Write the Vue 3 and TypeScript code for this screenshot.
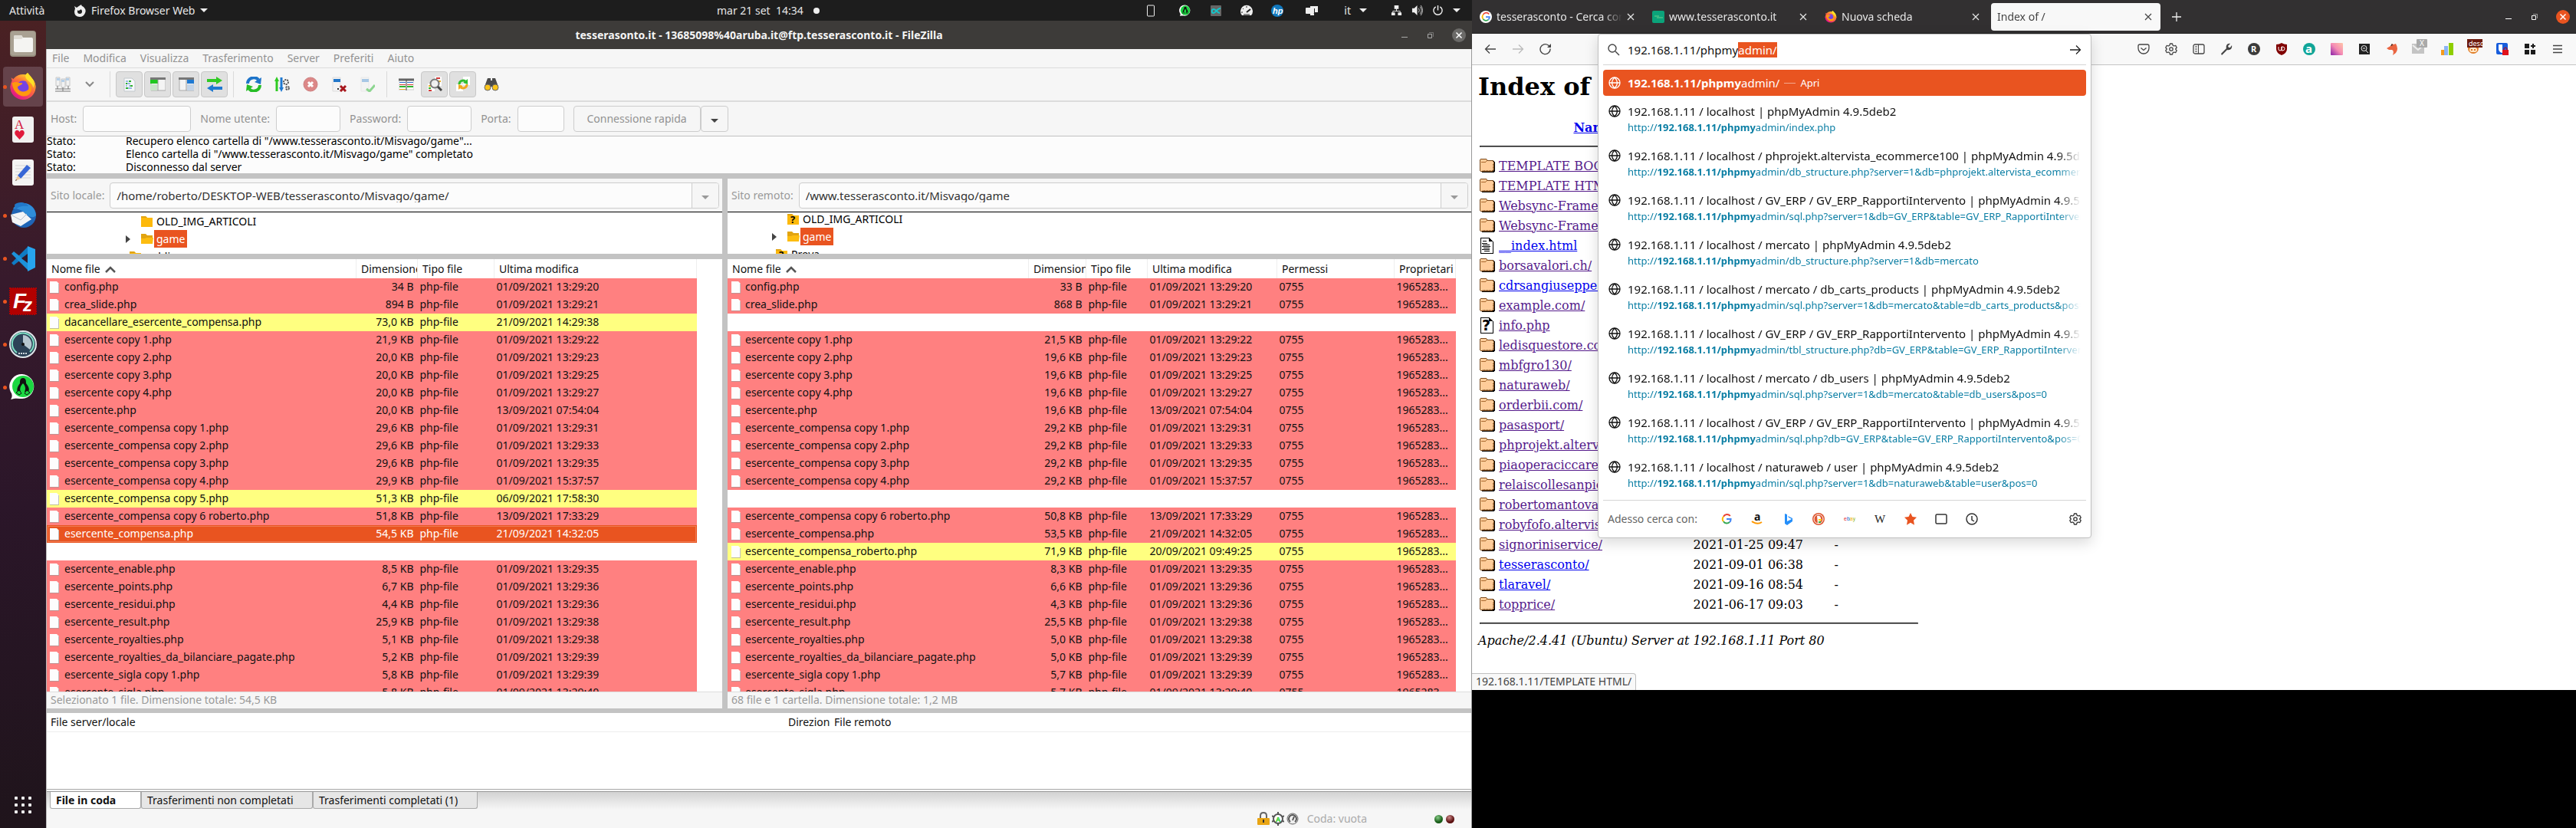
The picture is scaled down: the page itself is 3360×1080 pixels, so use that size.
<script setup lang="ts">
import { onMounted, ref } from 'vue'

type Kind = 'same' | 'only' | 'sel' | 'gap'
interface FileRow { name: string; size: string; date: string; kind: Kind }
interface Glyph { id: string; label: string; box: string; art: string }

const row = (name: string, size: string, date: string, kind: Kind = 'same'): FileRow => ({ name, size, date, kind })
const gap = (): FileRow => row('', '', '', 'gap')

const d1 = '01/09/2021 13:29:'
const localFiles: FileRow[] = [
  row('config.php', '34 B', d1 + '20'),
  row('crea_slide.php', '894 B', d1 + '21'),
  row('dacancellare_esercente_compensa.php', '73,0 KB', '21/09/2021 14:29:38', 'only'),
  row('esercente copy 1.php', '21,9 KB', d1 + '22'),
  row('esercente copy 2.php', '20,0 KB', d1 + '23'),
  row('esercente copy 3.php', '20,0 KB', d1 + '25'),
  row('esercente copy 4.php', '20,0 KB', d1 + '27'),
  row('esercente.php', '20,0 KB', '13/09/2021 07:54:04'),
  row('esercente_compensa copy 1.php', '29,6 KB', d1 + '31'),
  row('esercente_compensa copy 2.php', '29,6 KB', d1 + '33'),
  row('esercente_compensa copy 3.php', '29,6 KB', d1 + '35'),
  row('esercente_compensa copy 4.php', '29,9 KB', '01/09/2021 15:37:57'),
  row('esercente_compensa copy 5.php', '51,3 KB', '06/09/2021 17:58:30', 'only'),
  row('esercente_compensa copy 6 roberto.php', '51,8 KB', '13/09/2021 17:33:29'),
  row('esercente_compensa.php', '54,5 KB', '21/09/2021 14:32:05', 'sel'),
  gap(),
  row('esercente_enable.php', '8,5 KB', d1 + '35'),
  row('esercente_points.php', '6,7 KB', d1 + '36'),
  row('esercente_residui.php', '4,4 KB', d1 + '36'),
  row('esercente_result.php', '25,9 KB', d1 + '38'),
  row('esercente_royalties.php', '5,1 KB', d1 + '38'),
  row('esercente_royalties_da_bilanciare_pagate.php', '5,2 KB', d1 + '39'),
  row('esercente_sigla copy 1.php', '5,8 KB', d1 + '39'),
  row('esercente_sigla.php', '5,8 KB', d1 + '40'),
]
const remoteFiles: FileRow[] = [
  row('config.php', '33 B', d1 + '20'),
  row('crea_slide.php', '868 B', d1 + '21'),
  gap(),
  row('esercente copy 1.php', '21,5 KB', d1 + '22'),
  row('esercente copy 2.php', '19,6 KB', d1 + '23'),
  row('esercente copy 3.php', '19,6 KB', d1 + '25'),
  row('esercente copy 4.php', '19,6 KB', d1 + '27'),
  row('esercente.php', '19,6 KB', '13/09/2021 07:54:04'),
  row('esercente_compensa copy 1.php', '29,2 KB', d1 + '31'),
  row('esercente_compensa copy 2.php', '29,2 KB', d1 + '33'),
  row('esercente_compensa copy 3.php', '29,2 KB', d1 + '35'),
  row('esercente_compensa copy 4.php', '29,2 KB', '01/09/2021 15:37:57'),
  gap(),
  row('esercente_compensa copy 6 roberto.php', '50,8 KB', '13/09/2021 17:33:29'),
  row('esercente_compensa.php', '53,5 KB', '21/09/2021 14:32:05'),
  row('esercente_compensa_roberto.php', '71,9 KB', '20/09/2021 09:49:25', 'only'),
  row('esercente_enable.php', '8,3 KB', d1 + '35'),
  row('esercente_points.php', '6,6 KB', d1 + '36'),
  row('esercente_residui.php', '4,3 KB', d1 + '36'),
  row('esercente_result.php', '25,5 KB', d1 + '38'),
  row('esercente_royalties.php', '5,0 KB', d1 + '38'),
  row('esercente_royalties_da_bilanciare_pagate.php', '5,0 KB', d1 + '39'),
  row('esercente_sigla copy 1.php', '5,7 KB', d1 + '39'),
  row('esercente_sigla.php', '5,7 KB', d1 + '40'),
]

const sites = [
  {
    id: 'local', label: 'Sito locale:', path: '/home/roberto/DESKTOP-WEB/tesserasconto/Misvago/game/', files: localFiles,
    next: 'public', status: 'Selezionato 1 file. Dimensione totale: 54,5 KB',
  },
  {
    id: 'remote', label: 'Sito remoto:', path: '/www.tesserasconto.it/Misvago/game', files: remoteFiles,
    next: 'Prova', status: '68 file e 1 cartella. Dimensione totale: 1,2 MB',
  },
]

const menus = ['File', 'Modifica', 'Visualizza', 'Trasferimento', 'Server', 'Preferiti', 'Aiuto']
const log = [
  'Recupero elenco cartella di "/www.tesserasconto.it/Misvago/game"...',
  'Elenco cartella di "/www.tesserasconto.it/Misvago/game" completato',
  'Disconnesso dal server',
]

const flame = '<circle cx="17" cy="18" r="16" fill="url(#ffo)"/><path d="M4 13 2 6l6 4c4-5 9-3 12-6 1-3 2-3 3-4 0 5 9 7 10 17 0 9-7 16-16 16S1 27 1 18c0-2 1-4 3-5z" fill="url(#ffo)"/><circle cx="17" cy="18" r="8" fill="#7542e5"/><path d="M3 13c6-3 7 0 13 0 1 2-4 3-6 5 1 6 9 8 14 3 1-4-1-8-4-9 8 0 10 9 6 14-7 8-21 3-23-13z" fill="#ff980e"/><path d="M20 4c0 6 9 8 10 15 4-8-3-14-7-19-1 1-3 2-3 4z" fill="#ffe226"/>'
const penguin = '<path d="M2 34c2-3 2-5 1-8A16 16 0 1 1 17 33c-5 0-9-1-15 1z" fill="#fff"/><circle cx="18" cy="17" r="14" fill="#1bd741"/><path d="M18 6c4 0 4 4 4 7 3 4 5 7 3 11H11c-2-4 1-8 3-11 0-3 0-7 4-7z" fill="#111"/><path d="M18 13c3 3 4 7 2 11h-5c-2-4 0-8 3-11z" fill="#1bd741"/><path d="m9 25 4-3 3 4-3 2zM27 25l-4-3-3 4 3 2z" fill="#1bd741" stroke="#111"/>'

const dock: (Glyph & { running: boolean })[] = [
  { id: 'files', label: 'File', running: false, box: '0 0 36 36', art: '<rect x="1" y="1" width="34" height="34" rx="4" fill="#989080"/><rect x="2" y="2" width="32" height="31" rx="3" fill="#a9a193"/><path d="M6 9q0-2 2-2h8l2 3h11q2 0 2 2v15q0 2-2 2H8q-2 0-2-2z" fill="#f4f4f2"/><path d="M6 9q0-2 2-2h8l2 3-2 2H6z" fill="#e0ddd6"/>' },
  { id: 'firefox', label: 'Firefox', running: true, box: '0 0 34 35', art: flame },
  { id: 'cards', label: 'Solitario', running: false, box: '0 0 36 36', art: '<rect x="4" y="1" width="28" height="34" rx="3" fill="#f1f1f0"/><text x="7" y="17" font-family="Liberation Serif" font-size="17" fill="#d4153c">A</text><path d="M13.500 31 8 25q-2-4 1-6 3-1 4.500 2 1.500-3 4.500-2 3 2 1 6z" fill="#e01b3c"/>' },
  { id: 'editor', label: 'Editor', running: false, box: '0 0 36 36', art: '<rect x="4" y="1" width="28" height="34" rx="3" fill="#f4f4f3"/><path d="M8 9h20M8 13h20M8 17h20M8 21h20M8 25h20" stroke="#d5d5d5"/><path d="m23 8 5 4-13 14-4-4z" fill="#3767d6"/><path d="m11 22 4 4-7 3z" fill="#edc9a0"/><path d="m9 27 1 1-2 1z" fill="#333"/>' },
  { id: 'mail', label: 'Thunderbird', running: true, box: '0 0 36 36', art: '<circle cx="19" cy="18" r="16" fill="#1f64b5"/><path d="M5 9C14-4 34 2 35 18c-4 4-8 2-11 0C19 12 12 9 5 9z" fill="#2f8dd9"/><path d="M2 17 18 13l11 10-14 9L4 27z" fill="#f3f4f6"/><path d="m2 17 13 7 8-8" fill="none" stroke="#b9c0cb"/><path d="M7 4c6-5 15-3 18 2-7-1-14 0-17 5z" fill="#2177c8"/>' },
  { id: 'code', label: 'Visual Studio Code', running: true, box: '0 0 36 36', art: '<path d="M3 24 24 3l2 8L6 27z" fill="#0f7bc4"/><path d="M3 12l21 21 2-8L6 9z" fill="#1c92da"/><path d="m24 2 10 4v24l-10 5z" fill="#27a4ee"/><path d="M24 12v12l-8-6z" fill="#301a2c"/>' },
  { id: 'fz', label: 'FileZilla', running: true, box: '0 0 36 36', art: '<rect x="1" y="1" width="34" height="34" fill="#b30000" stroke="#b30000" stroke-width="2" stroke-dasharray="2 1"/><text x="5" y="27" font-family="Liberation Sans" font-size="28" font-weight="bold" font-style="italic" fill="#fff">F</text><text x="18" y="31" font-family="Liberation Sans" font-size="24" font-weight="bold" font-style="italic" fill="#fff">z</text>' },
  { id: 'gauge', label: 'Stacer', running: true, box: '0 0 36 36', art: '<circle cx="18" cy="18" r="17" fill="#2c4257" stroke="#dfe6ea" stroke-width="2"/><path d="M10 29A14 14 0 1 1 27 28" fill="none" stroke="#7de0c4" stroke-width="2"/><path d="M18 18V6a12 12 0 0 1 9 19z" fill="#b7c7d0"/><circle cx="18" cy="18" r="2" fill="#111"/><path d="M12 30h12" stroke="#cfd8dd" stroke-width="2" stroke-dasharray="2 1"/>' },
  { id: 'wa', label: 'WhatsApp', running: true, box: '0 0 36 36', art: penguin },
]

const tray: Glyph[] = [
  { id: 'phone', label: 'Telefono', box: '0 0 16 16', art: '<rect x="3.500" y="1" width="9" height="14" rx="1" fill="none" stroke="#eee"/>' },
  { id: 'wa', label: 'WhatsApp', box: '0 0 36 36', art: penguin },
  { id: 'inf', label: 'Sincronizzazione', box: '0 0 16 16', art: '<rect x="1" y="1" width="14" height="14" rx="1" fill="#666"/><path d="M14 5C10 4 8 11 5 11 2 11 2 6 5 6s5 5 8 5" fill="none" stroke="#14c5c9" stroke-width="2"/>' },
  { id: 'meter', label: 'Prestazioni', box: '0 0 16 16', art: '<path d="M2 14A8 8 0 1 1 14 14z" fill="#eee"/><path d="m8 10 5-4" stroke="#222" stroke-width="2"/><path d="M3 10H1m3-4L3 5m5-1V2m-4 11h8" stroke="#222"/>' },
  { id: 'hp', label: 'HP', box: '0 0 16 16', art: '<circle cx="8" cy="8" r="8" fill="#1178bd"/><text x="2" y="12" font-family="Liberation Sans" font-size="11" font-weight="bold" font-style="italic" fill="#fff">hp</text>' },
  { id: 'screens', label: 'Schermi', box: '0 0 16 16', art: '<path d="M6 2h10v8h-4V5H6z" fill="#eee"/><rect x="0" y="4" width="11" height="8" rx="1" fill="#eee"/><path d="M6 13h5" stroke="#eee" stroke-width="2"/>' },
]
const system: Glyph[] = [
  { id: 'net', label: 'Rete', box: '0 0 16 16', art: '<path d="M5 1h6v5H5zM1 11h5v4H1zM10 11h5v4h-5z" fill="#eee"/><path d="M8 5v4M3 12V9h10v3" stroke="#eee" fill="none"/>' },
  { id: 'snd', label: 'Volume', box: '0 0 16 16', art: '<path d="M1 5h3l4-4v14l-4-4H1z" fill="#eee"/><path d="M10 5q2 3 0 6m2-8q4 5 0 10m1-12q5 7 0 14" stroke="#ccc" fill="none"/>' },
  { id: 'pow', label: 'Spegni', box: '0 0 16 16', art: '<path d="M5 3a6 6 0 1 0 6 0M8 1v7" stroke="#eee" fill="none" stroke-width="1.500"/>' },
]

const doc = '<path d="M3 2h10l4 4v13H3z" fill="#f5f7f9" stroke="#c3c8cc"/>'
const toolGroups: (Glyph & { on?: boolean })[][] = [
  [
    { id: 'log', label: 'Registro', on: true, box: '0 0 20 20', art: doc + '<path d="M5 6h3m2 0h2M5 9h6M5 12h2m2 0h5M5 15h8" stroke="#3d7cc9"/><path d="M9 6h3M5 9h2m4 3h3M5 15h3" stroke="#2db12d" stroke-width="2"/>' },
    { id: 'ltree', label: 'Albero locale', on: true, box: '0 0 20 20', art: '<path d="M1 2h19v16H1z" fill="#f4f4f4" stroke="#aaa"/><path d="M0 1h20v3H0z" fill="#777"/><path d="M0 4h10v5H0z" fill="#1fc71f"/><path d="M0 10h9v8H0z" fill="#c9e4c9"/><path d="M10 4v14" stroke="#999"/>' },
    { id: 'rtree', label: 'Albero remoto', on: true, box: '0 0 20 20', art: '<path d="M1 2h19v16H1z" fill="#f4f4f4" stroke="#aaa"/><path d="M0 1h20v3H0z" fill="#777"/><path d="M11 4h9v5h-9z" fill="#1e79d2"/><path d="M11 10h9v8h-9z" fill="#c3d4e8"/><path d="M10 4v14" stroke="#999"/>' },
    { id: 'queue', label: 'Coda', on: true, box: '0 0 20 20', art: '<path d="M0 3h12V0l8 5-8 5V7H0z" fill="#2fca23"/><path d="M20 13H8v-3l-8 5 8 5v-3h12z" fill="#1e79d2"/>' },
  ],
  [
    { id: 'refresh', label: 'Aggiorna', box: '0 0 20 20', art: '<path d="M2 9A8 8 0 0 1 16 4" fill="none" stroke="#1d74c9" stroke-width="4"/><path d="m20 1-1 9-8-3z" fill="#1d74c9"/><path d="M18 11A8 8 0 0 1 4 16" fill="none" stroke="#26bd26" stroke-width="4"/><path d="m0 19 1-9 8 3z" fill="#26bd26"/>' },
    { id: 'process', label: 'Elabora coda', box: '0 0 20 20', art: '<path d="M3 19V5" stroke="#2fca23" stroke-width="3"/><path d="M0 6l3-6 3 6z" fill="#2fca23"/><path d="M9 1v14" stroke="#1e79d2" stroke-width="3"/><path d="M6 14l3 6 3-6z" fill="#1e79d2"/><circle cx="15" cy="7" r="3" fill="none" stroke="#555" stroke-width="2" stroke-dasharray="2 1"/><circle cx="17" cy="15" r="2" fill="none" stroke="#555" stroke-width="2" stroke-dasharray="2 1"/>' },
    { id: 'cancel', label: 'Annulla', box: '0 0 20 20', art: '<circle cx="10" cy="10" r="9" fill="#dc8888" stroke="#cc8080"/><path d="m7 7 6 6m0-6-6 6" stroke="#fff" stroke-width="3"/>' },
    { id: 'disc', label: 'Disconnetti', box: '0 0 20 20', art: '<path d="M2 1h10v18H2z" fill="#f2f2f2" stroke="#ddd"/><path d="M3 3h9v4H3z" fill="#2277c9"/><path d="M8 16h2" stroke="#333" stroke-width="2"/><path d="m12 12 7 7m0-7-7 7" stroke="#a6161c" stroke-width="3"/>' },
    { id: 'reconn', label: 'Riconnetti', box: '0 0 20 20', art: '<g opacity=".5"><path d="M2 1h10v18H2z" fill="#f2f2f2" stroke="#ddd"/><path d="M3 3h9v4H3z" fill="#5b9ad6"/><path d="m9 16 4 3 7-8" fill="none" stroke="#25b52b" stroke-width="3"/></g>' },
  ],
  [
    { id: 'filter', label: 'Filtri', box: '0 0 20 20', art: '<path d="M0 3h20v14H0z" fill="#fff" stroke="#ccc"/><path d="M0 4h20" stroke="#666" stroke-width="3"/><path d="M1 7.500h8m2 0h8" stroke="#2c6fc9"/><path d="M1 10.500h8m2 0h8" stroke="#d43939"/><path d="M1 13h8m2 0h8" stroke="#2fb52f" stroke-width="2"/><path d="M1 16.500h8" stroke="#e8ad2b"/><path d="M10 4v14" stroke="#444"/>' },
    { id: 'compare', label: 'Confronta', on: true, box: '0 0 20 20', art: '<path d="M10 0h9v12h-9zM1 9h9v10H1z" fill="#fff"/><path d="M12 2h5M2 18h4" stroke="#d43939" stroke-width="2"/><path d="M15 6h3M2 12h3" stroke="#e8ad2b" stroke-width="2"/><path d="M2 15h3" stroke="#2fb52f" stroke-width="2"/><circle cx="10" cy="9" r="5.500" fill="#eee" fill-opacity=".8" stroke="#777" stroke-width="2"/><path d="m14 13 5 5" stroke="#444" stroke-width="3"/>' },
    { id: 'sync', label: 'Navigazione sincronizzata', on: true, box: '0 0 20 20', art: '<path d="M10 0h9v11h-9zM1 10h9v9H1z" fill="#fff"/><path d="M5 10a5 5 0 0 1 8-4" fill="none" stroke="#2fbe2f" stroke-width="3"/><path d="M16 3v7l-6-2z" fill="#2fbe2f"/><path d="M15 10a5 5 0 0 1-8 4" fill="none" stroke="#eea71c" stroke-width="3"/><path d="M4 17v-7l6 2z" fill="#eea71c"/>' },
    { id: 'find', label: 'Cerca file', box: '0 0 20 20', art: '<path d="M5 2h4v3h2V2h4l4 11H1z" fill="#4b4b4b"/><circle cx="5" cy="14" r="4" fill="#fcc419" stroke="#666"/><circle cx="15" cy="14" r="4" fill="#fcc419" stroke="#666"/>' },
  ],
]

const googleG = '<path d="M14 3 A6.500 6.500 0 0 0 3 4" fill="none" stroke="#ea4335" stroke-width="2.500"/><path d="M3 4a6.500 6.500 0 0 0 0 8" fill="none" stroke="#fbbc05" stroke-width="2.500"/><path d="M3 12a6.500 6.500 0 0 0 10 1" fill="none" stroke="#34a853" stroke-width="2.500"/><path d="M13 13a6.500 6.500 0 0 0 2-5H8" fill="none" stroke="#4285f4" stroke-width="2.500"/>'
const tabs = [
  { title: 'tesserasconto - Cerca con Google', box: '0 0 16 16', art: '<circle cx="8" cy="8" r="8" fill="#fff"/><g transform="translate(2.400 2.400) scale(.7)">' + googleG + '</g>', active: false },
  { title: 'www.tesserasconto.it', box: '0 0 16 16', art: '<rect width="16" height="16" rx="2" fill="#0ba37a"/><path d="M3 7h6M6 9h8" stroke="#6fcf8d"/>', active: false },
  { title: 'Nuova scheda', box: '0 0 34 35', art: flame, active: false },
  { title: 'Index of /', box: '', art: '', active: true },
]

const gear = '<circle cx="8" cy="8" r="2.200" fill="none" stroke="currentColor" stroke-width="1.300"/><path d="M6.500 1h3l.6 2.100 1.500.9 2.100-.6 1.500 2.600L13.700 8l1.500 2-1.500 2.600-2.100-.6-1.500.9-.6 2.100h-3l-.6-2.100-1.500-.9-2.100.6L.8 10l1.500-2L.8 6l1.500-2.600 2.100.6 1.500-.9z" fill="none" stroke="currentColor" stroke-width="1.300" stroke-linejoin="round"/>'
const extensions: Glyph[] = [
  { id: 'pocket', label: 'Pocket', box: '0 0 16 16', art: '<path d="M3 2h10q2 0 2 2v3a7 7 0 0 1-14 0V4q0-2 2-2z" fill="none" stroke="currentColor" stroke-width="1.300"/><path d="m4.500 6.500 3.500 3 3.500-3" fill="none" stroke="currentColor" stroke-width="1.300"/>' },
  { id: 'gear', label: 'Impostazioni', box: '0 0 16 16', art: gear },
  { id: 'side', label: 'Barra laterale', box: '0 0 16 16', art: '<rect x="1" y="2" width="14" height="12" rx="2" fill="none" stroke="currentColor" stroke-width="1.300"/><path d="M7.500 2v12M3 5h3M3 8h3M3 11h3" stroke="currentColor"/>' },
  { id: 'wrench', label: 'Strumenti', box: '0 0 16 16', art: '<path d="M1 14 8 7C7 4 9 0 13 1l-3 3 1 2 2 0 2-3c1 4-2 7-6 6l-7 7z" fill="#444"/>' },
  { id: 'r', label: 'Redirector', box: '0 0 16 16', art: '<circle cx="8" cy="8" r="8" fill="#3b3b3b"/><text x="4" y="12" font-family="Noto Sans" font-size="11" font-weight="bold" fill="#fff">R</text>' },
  { id: 'ub', label: 'uBlock', box: '0 0 16 16', art: '<path d="M8 0q3 2 7 2v6q0 5-7 8-7-3-7-8V2q4 0 7-2z" fill="#800000"/><path d="M4 5v3q0 2 2 2t2-2V5v5h1q3 0 3-2.500T9 5H8" fill="none" stroke="#fff"/>' },
  { id: 'a', label: 'Avira', box: '0 0 16 16', art: '<circle cx="8" cy="8" r="8" fill="#10a598"/><text x="3" y="13" font-family="Noto Sans" font-size="15" font-weight="bold" fill="#fff">a</text>' },
  { id: 'grad', label: 'Colori', box: '0 0 16 16', art: '<rect width="16" height="16" rx="1" fill="url(#pink)"/>' },
  { id: 'qr', label: 'Ispeziona', box: '0 0 16 16', art: '<rect x="1" y="1" width="14" height="14" fill="#222"/><circle cx="7.500" cy="7" r="3.500" fill="none" stroke="#eee"/><path d="m10 10 3 3M6 7h3" stroke="#eee"/>' },
  { id: 'fox', label: 'Fox', box: '0 0 16 16', art: '<path d="M1 7 6 4 8 1l2 1 3-1q4 7 0 12l-4 3q2-6-1-7H4z" fill="#ea6541"/><path d="m6 4 2-3 1 2z" fill="#222"/>' },
  { id: 'mail', label: 'Posta', box: '0 0 20 20', art: '<path d="M0 6h16v13H0z" fill="#c4c4c4"/><path d="m1 8 7 6 7-6" fill="none" stroke="#eee" stroke-width="2"/><rect x="6" y="0" width="14" height="11" rx="1" fill="#aaa"/><text x="10" y="9" font-family="Noto Sans" font-size="10" fill="#fff">X</text>' },
  { id: 'bars', label: 'Statistiche', box: '0 0 16 16', art: '<path d="M0 9h4v7H0z" fill="#f59b1e"/><path d="M4 4h5v12H4z" fill="#8ab4f5"/><path d="M10 0h6v16h-6z" fill="#8fce00"/>' },
  { id: 'monkey', label: 'Desc', box: '0 0 20 20', art: '<circle cx="8" cy="12" r="7" fill="#e07c26"/><rect x="3" y="11" width="10" height="6" rx="3" fill="#ffe7c9"/><path d="M6 13v2M10 13v2" stroke="#e07c26" stroke-width="2"/><rect width="20" height="11" fill="#6d1a0d"/><text x="2" y="9" font-family="Noto Sans" font-size="9" fill="#fff">desc</text>' },
  { id: 'bw', label: 'Bitwarden', box: '0 0 16 16', art: '<rect width="15" height="15" rx="2" fill="#175ddc"/><path d="M3 2h9v6q-1 4-5 5-4-2-4-5z" fill="#fff"/><path d="M8 2h4v6q-1 4-4 5z" fill="#175ddc"/><rect x="8" y="9" width="8" height="7" fill="#e0121b"/><path d="M10 9V7q2-2 4 0v2" fill="none" stroke="#c00"/>' },
  { id: 'grid', label: 'Estensioni', box: '0 0 16 16', art: '<path d="M1 1h6v6H1zM1 9h6v6H1zM9 9h6v6H9zM11 1h2v2h2v2h-2v2h-2V5H9V3h2z" fill="#1b1b1b"/>' },
  { id: 'menu', label: 'Menu', box: '0 0 16 16', art: '<path d="M2 3.500h12M2 8h12M2 12.500h12" stroke="#444" stroke-width="1.300"/>' },
]

const engines: Glyph[] = [
  { id: 'g', label: 'Google', box: '0 0 16 16', art: '<g transform="translate(1.600 1.600) scale(.8)">' + googleG + '</g>' },
  { id: 'amazon', label: 'Amazon', box: '0 0 16 16', art: '<text x="4" y="10" font-family="Noto Sans" font-size="14" font-weight="bold" fill="#111">a</text><path d="M1 11q7 5 13 1" fill="none" stroke="#f90" stroke-width="2"/>' },
  { id: 'bing', label: 'Bing', box: '0 0 16 16', art: '<path d="m4 1 3 1v9l6-3-4-2-1-2 6 3v4l-7 5-3-2z" fill="#258ffa"/>' },
  { id: 'ddg', label: 'DuckDuckGo', box: '0 0 16 16', art: '<circle cx="8" cy="8" r="8" fill="#de5833"/><circle cx="8" cy="8" r="6" fill="none" stroke="#fff"/><path d="M6 4q5-1 5 4l-1 5-3 1z" fill="#fff"/><path d="M8 8h4v2H8z" fill="#fdd20a"/><path d="M8 11h3v2H8z" fill="#3ca82b"/>' },
  { id: 'ebay', label: 'eBay', box: '0 0 16 16', art: '<text x="1" y="10" font-family="Liberation Sans" font-size="7"><tspan fill="#e53238">e</tspan><tspan fill="#0064d2">b</tspan><tspan fill="#f5af02">a</tspan><tspan fill="#86b817">y</tspan></text>' },
  { id: 'wiki', label: 'Wikipedia', box: '0 0 16 16', art: '<text x="1" y="13" font-family="Liberation Serif" font-size="15" fill="#222">W</text>' },
  { id: 'star', label: 'Segnalibri', box: '0 0 16 16', art: '<path d="m8 0 2.500 5 5.500.8-4 4 1 6-5-3-5 3 1-6-4-4 5.500-.8z" fill="#e95420"/>' },
  { id: 'tabs', label: 'Schede', box: '0 0 16 16', art: '<rect x="1" y="2" width="14" height="12" rx="1.500" fill="none" stroke="#333" stroke-width="1.500"/>' },
  { id: 'hist', label: 'Cronologia', box: '0 0 16 16', art: '<circle cx="8" cy="8" r="7" fill="none" stroke="#333" stroke-width="1.500"/><path d="M8 4v5l3 2" fill="none" stroke="#333" stroke-width="1.500"/>' },
]

const host = '192.168.1.11'
const results = [
  ['localhost', 'index.php'],
  ['localhost / phprojekt.altervista_ecommerce100', 'db_structure.php?server=1&db=phprojekt.altervista_ecommerce100'],
  ['localhost / GV_ERP / GV_ERP_RapportiIntervento', 'sql.php?server=1&db=GV_ERP&table=GV_ERP_RapportiIntervento&pos=0'],
  ['localhost / mercato', 'db_structure.php?server=1&db=mercato'],
  ['localhost / mercato / db_carts_products', 'sql.php?server=1&db=mercato&table=db_carts_products&pos=0'],
  ['localhost / GV_ERP / GV_ERP_RapportiIntervento', 'tbl_structure.php?db=GV_ERP&table=GV_ERP_RapportiIntervento'],
  ['localhost / mercato / db_users', 'sql.php?server=1&db=mercato&table=db_users&pos=0'],
  ['localhost / GV_ERP / GV_ERP_RapportiIntervento', 'sql.php?db=GV_ERP&table=GV_ERP_RapportiIntervento&pos=0'],
  ['localhost / naturaweb / user', 'sql.php?server=1&db=naturaweb&table=user&pos=0'],
]

const index: { name: string; fresh?: boolean; icon?: string; date?: string }[] = [
  { name: 'TEMPLATE BOOTSTRAP/' }, { name: 'TEMPLATE HTML/' }, { name: 'Websync-Framework/' }, { name: 'Websync-Framework2/' },
  { name: '__index.html', fresh: true, icon: 'text' }, { name: 'borsavalori.ch/' }, { name: 'cdrsangiuseppe.it/', fresh: true },
  { name: 'example.com/' }, { name: 'info.php', icon: 'unknown' }, { name: 'ledisquestore.com/' }, { name: 'mbfgro130/' },
  { name: 'naturaweb/' }, { name: 'orderbii.com/' }, { name: 'pasasport/' }, { name: 'phprojekt.altervista/' },
  { name: 'piaoperaciccarelli/' }, { name: 'relaiscollesanpietro/' }, { name: 'robertomantovani/' }, { name: 'robyfofo.altervista/' },
  { name: 'signoriniservice/', date: '2021-01-25 09:47' }, { name: 'tesserasconto/', fresh: true, date: '2021-09-01 06:38' },
  { name: 'tlaravel/', fresh: true, date: '2021-09-16 08:54' }, { name: 'topprice/', date: '2021-06-17 09:03' },
]

const address = ref(host + '/phpmyadmin/')
const urlInput = ref<HTMLInputElement | null>(null)
onMounted(() => {
  urlInput.value?.focus()
  urlInput.value?.setSelectionRange(18, 24)
})
</script>

<template>
  <main class="desktop">
    <svg class="defs" aria-hidden="true">
      <defs>
        <linearGradient id="ffo" x1="1" y1="0" x2="0.300" y2="1"><stop offset="0.100" stop-color="#ffe226" /><stop offset="0.500" stop-color="#ff7139" /><stop offset="1" stop-color="#e31587" /></linearGradient>
        <linearGradient id="pink" x1="1" y1="0" x2="0" y2="1"><stop offset="0" stop-color="#ffc6a8" /><stop offset="0.500" stop-color="#f58cb4" /><stop offset="1" stop-color="#8a1fa8" /></linearGradient>
      </defs>
    </svg>
    <section class="screen-left">
      <header class="topbar">
        <button class="bar-btn activities">Attività</button>
        <button class="bar-btn app-btn">
          <svg width="16" height="16" viewBox="0 0 16 16"><path d="M2 5 1 2l3 2q4-3 6-4 0 2 3 3 4 4 2 8-2 5-7 5-7 0-7-7z" fill="#eee" /><circle cx="8" cy="9" r="3" fill="#1d1d1d" /><path d="M4 5h5q1 2-3 3z" fill="#eee" /></svg>
          Firefox Browser Web<i class="tri"></i>
        </button>
        <span class="clock">mar 21 set&nbsp; 14:34<i class="dot"></i></span>
        <div class="tray">
          <svg v-for="g in tray" :key="g.id" class="tray-icon" :viewBox="g.box" :aria-label="g.label" v-html="g.art"></svg>
        </div>
        <button class="bar-btn lang">it<i class="tri"></i></button>
        <button class="bar-btn system"><svg v-for="g in system" :key="g.id" width="15" height="15" :viewBox="g.box" v-html="g.art"></svg><i class="tri"></i></button>
      </header>

      <nav class="dock">
        <button v-for="d in dock" :key="d.id" class="dock-item" :class="{ running: d.running, current: d.id === 'firefox' }" :aria-label="d.label">
          <svg width="36" height="36" :viewBox="d.box" v-html="d.art"></svg>
        </button>
        <button class="dock-item apps" aria-label="Mostra applicazioni"><i v-for="n in 9" :key="n"></i></button>
      </nav>

      <section class="fz">
        <header class="fz-title">
          <h1>tesserasonto.it - 13685098%40aruba.it@ftp.tesserasconto.it - FileZilla</h1>
          <div class="win-controls dim">
            <button aria-label="Riduci"><svg width="10" height="10" viewBox="0 0 10 10"><path d="M1 7.500h8" stroke="currentColor" /></svg></button>
            <button aria-label="Ripristina"><svg width="10" height="10" viewBox="0 0 10 10"><path d="M1.500 3.500h5v5h-5z" fill="none" stroke="currentColor" /><path d="M3 1.500h5.500V7" fill="none" stroke="currentColor" opacity=".5" /></svg></button>
            <button class="round" aria-label="Chiudi"><svg width="10" height="10" viewBox="0 0 10 10"><path d="m1.500 1.500 7 7m0-7-7 7" stroke="#fff" stroke-width="1.500" /></svg></button>
          </div>
        </header>
        <nav class="fz-menu"><button v-for="m in menus" :key="m">{{ m }}</button></nav>
        <div class="fz-tools">
          <button class="tool" aria-label="Gestore siti">
            <svg width="22" height="22" viewBox="0 0 22 22"><path d="M2 2h5v11H2zM9 4h5v11H9zM15 2h5v11h-5z" fill="#f2f2f2" stroke="#c6c6c6" /><path d="M3 3h4v3H3zM9 5h4v3H9zM15 3h4v3h-4z" fill="#b5cfe8" /><path d="M4 13v4M11 15v5M18 13v4M1 17h20M1 20h20" stroke="#777" /></svg>
          </button>
          <button class="tool narrow" aria-label="Siti"><svg width="12" height="8" viewBox="0 0 12 8"><path d="m1 1 5 5 5-5" fill="none" stroke="#888" stroke-width="2" /></svg></button>
          <div v-for="(grp, i) in toolGroups" :key="i" class="tool-group">
            <button v-for="t in grp" :key="t.id" class="tool" :class="{ on: t.on }" :aria-label="t.label"><svg width="20" height="20" :viewBox="t.box" v-html="t.art"></svg></button>
          </div>
        </div>
        <form class="quick" @submit.prevent>
          <label for="q-host">Host:</label><input id="q-host" class="w-host">
          <label for="q-user">Nome utente:</label><input id="q-user" class="w-user">
          <label for="q-pass">Password:</label><input id="q-pass" type="password" class="w-user">
          <label for="q-port">Porta:</label><input id="q-port" class="w-port">
          <button class="connect">Connessione rapida</button><button class="drop" aria-label="Cronologia"><i class="tri dark"></i></button>
        </form>
        <div class="log"><p v-for="l in log" :key="l"><span>Stato:</span>{{ l }}</p></div>

        <div class="panes">
          <section v-for="s in sites" :key="s.id" class="pane" :class="s.id">
            <div class="site">
              <label :for="'p-' + s.id">{{ s.label }}</label>
              <div class="combo"><input :id="'p-' + s.id" :value="s.path"><button aria-label="Elenco"><i class="tri grey"></i></button></div>
            </div>
            <ul class="tree">
              <li class="leaf">
                <svg width="16" height="16" viewBox="0 0 16 16"><path d="M0 1h6l2 2h7v12H0z" fill="#fdb90b" /><path d="M0 1h6l2 2H0z" fill="#e2a410" /><text v-if="s.id === 'remote'" x="4" y="13" font-family="Noto Sans" font-size="13" font-weight="bold">?</text></svg><span>OLD_IMG_ARTICOLI</span>
              </li>
              <li>
                <i class="expander"></i><svg width="16" height="16" viewBox="0 0 16 16"><path d="M0 1h6l2 2h7v10H0z" fill="#e2a410" /><path d="M0 7h5l2-1h9l-1 8H0z" fill="#fdbd10" /></svg><span class="hit">game</span>
              </li>
              <li class="up">
                <svg width="16" height="16" viewBox="0 0 16 16"><path d="M0 1h6l2 2h7v12H0z" fill="#fdb90b" /><path d="M0 1h6l2 2H0z" fill="#e2a410" /><text v-if="s.id === 'remote'" x="4" y="13" font-family="Noto Sans" font-size="13" font-weight="bold">?</text></svg><span>{{ s.next }}</span>
              </li>
            </ul>
            <div class="list">
              <table class="files">
                <colgroup><col class="c-name"><col class="c-size"><col class="c-type"><col class="c-date"><template v-if="s.id === 'remote'"><col class="c-perm"><col class="c-own"></template></colgroup>
                <thead>
                  <tr>
                    <th>Nome file <svg width="14" height="9" viewBox="0 0 14 9"><path d="m1 8 6-6 6 6" fill="none" stroke="#555" stroke-width="2.500" /></svg></th>
                    <th>Dimensione</th><th>Tipo file</th><th>Ultima modifica</th>
                    <template v-if="s.id === 'remote'"><th>Permessi</th><th>Proprietari</th></template>
                  </tr>
                </thead>
                <tbody>
                  <tr v-for="(f, i) in s.files" :key="i" :class="f.kind">
                    <template v-if="f.kind !== 'gap'">
                      <td><svg width="12" height="16" viewBox="0 0 12 16"><path d="M0 0h9l3 3v12H0z" fill="#fdfdfd" /><path d="M0 15.500h12M11.500 3v12" stroke="#999" stroke-opacity=".6" /></svg>{{ f.name }}</td>
                      <td class="num">{{ f.size }}</td><td>php-file</td><td>{{ f.date }}</td>
                      <template v-if="s.id === 'remote'"><td>0755</td><td>1965283...</td></template>
                    </template>
                    <td v-else :colspan="s.id === 'remote' ? 6 : 4"></td>
                  </tr>
                </tbody>
              </table>
            </div>
            <footer class="pane-status">{{ s.status }}</footer>
          </section>
        </div>

        <div class="queue">
          <table><colgroup><col class="q1"><col class="q2"><col></colgroup><thead><tr><th>File server/locale</th><th>Direzione</th><th>File remoto</th></tr></thead></table>
        </div>
        <div class="queue-tabs">
          <button class="sel">File in coda</button><button class="t-fail">Trasferimenti non completati</button><button class="t-done">Trasferimenti completati (1)</button>
        </div>
        <footer class="fz-status">
          <svg width="16" height="18" viewBox="0 0 16 18"><path d="M4 8V5q0-4 4-4t4 4v3" fill="none" stroke="#666" stroke-width="2" /><rect y="8" width="16" height="9" rx="1" fill="#e9a514" /><path d="M8 10v4" stroke="#333" stroke-width="2" /></svg>
          <svg width="16" height="18" viewBox="0 0 16 18"><circle cx="8" cy="9" r="6" fill="#fff" stroke="#555" stroke-width="2" /><path d="M8 0v3M8 15v3M0 5l3 2M0 13l3-2M16 5l-3 2M16 13l-3-2" stroke="#555" stroke-width="2" /><text x="5" y="13" font-family="Noto Sans" font-size="9" font-weight="bold" fill="#2c2">A</text></svg>
          <svg width="16" height="18" viewBox="0 0 16 18"><circle cx="8" cy="9" r="7" fill="#eee" stroke="#666" /><path d="M5 13a5 5 0 1 1 6 0M8 11l2-5" fill="none" stroke="#555" stroke-width="2" /></svg>
          <span>Coda: vuota</span><i class="led green"></i><i class="led red"></i>
        </footer>
      </section>
    </section>

    <section class="screen-right">
      <section class="browser">
        <header class="tabs">
          <div v-for="t in tabs" :key="t.title" class="tab" :class="{ active: t.active }">
            <svg v-if="t.art" width="16" height="16" :viewBox="t.box" v-html="t.art"></svg>
            <span>{{ t.title }}</span>
            <button aria-label="Chiudi scheda"><svg width="10" height="10" viewBox="0 0 10 10"><path d="m1 1 8 8m0-8-8 8" stroke="currentColor" stroke-width="1.200" /></svg></button>
          </div>
          <button class="plus" aria-label="Nuova scheda"><svg width="12" height="12" viewBox="0 0 12 12"><path d="M6 0v12M0 6h12" stroke="#eee" stroke-width="1.300" /></svg></button>
          <div class="win-controls">
            <button aria-label="Riduci"><svg width="10" height="10" viewBox="0 0 10 10"><path d="M1 7.500h8" stroke="currentColor" /></svg></button>
            <button aria-label="Ripristina"><svg width="10" height="10" viewBox="0 0 10 10"><path d="M1.500 3.500h5v5h-5z" fill="none" stroke="currentColor" /><path d="M3 1.500h5.500V7" fill="none" stroke="currentColor" opacity=".5" /></svg></button>
            <button class="round hot" aria-label="Chiudi"><svg width="10" height="10" viewBox="0 0 10 10"><path d="m1.500 1.500 7 7m0-7-7 7" stroke="#fff" stroke-width="1.500" /></svg></button>
          </div>
        </header>
        <nav class="navbar">
          <button aria-label="Indietro"><svg width="16" height="16" viewBox="0 0 16 16"><path d="M15 8H2m5-5.500L1.500 8 7 13.500" fill="none" stroke="#444" stroke-width="1.300" /></svg></button>
          <button aria-label="Avanti"><svg width="16" height="16" viewBox="0 0 16 16"><path d="M1 8h13M9 2.500 14.500 8 9 13.500" fill="none" stroke="#bbb" stroke-width="1.300" /></svg></button>
          <button aria-label="Ricarica"><svg width="16" height="16" viewBox="0 0 16 16"><path d="M14 7.500a6.500 6.500 0 1 1-2.500-4.500L14 5" fill="none" stroke="#444" stroke-width="1.400" /><path d="M15 1v5h-5z" fill="#444" /></svg></button>
          <div class="exts">
            <button v-for="e in extensions" :key="e.id" :aria-label="e.label"><svg :class="{ wide: e.box === '0 0 20 20' }" :viewBox="e.box" v-html="e.art"></svg></button>
          </div>
          <div class="suggest">
            <div class="url-row">
              <svg width="16" height="16" viewBox="0 0 16 16"><circle cx="6" cy="6" r="5" fill="none" stroke="#444" stroke-width="1.400" /><path d="m10 10 5 5" stroke="#444" stroke-width="1.400" /></svg>
              <input ref="urlInput" v-model="address" class="url" aria-label="Indirizzo">
              <button aria-label="Vai"><svg width="16" height="16" viewBox="0 0 16 16"><path d="M1 8h13M9 2.500 14.500 8 9 13.500" fill="none" stroke="#222" stroke-width="1.300" /></svg></button>
            </div>
            <a class="top-hit" href="#"><svg class="globe" viewBox="0 0 16 16"><circle cx="8" cy="8" r="7" /><path d="M1 8h14M8 1Q1 8 8 15M8 1q7 7 0 14" /></svg><span><b>{{ host }}/phpmy</b>admin/</span><i></i><small>Apri</small></a>
            <a v-for="(r, i) in results" :key="i" class="result" href="#">
              <svg class="globe" viewBox="0 0 16 16"><circle cx="8" cy="8" r="7" /><path d="M1 8h14M8 1Q1 8 8 15M8 1q7 7 0 14" /></svg>
              <span class="r-title">{{ host }} / {{ r[0] }} | phpMyAdmin 4.9.5deb2</span>
              <span class="r-url">http://<b>{{ host }}/phpmy</b>admin/{{ r[1] }}</span>
            </a>
            <footer class="engines">
              <span>Adesso cerca con:</span>
              <button v-for="e in engines" :key="e.id" :aria-label="e.label"><svg width="16" height="16" :viewBox="e.box" v-html="e.art"></svg></button>
              <button class="cfg" aria-label="Impostazioni ricerca"><svg width="16" height="16" viewBox="0 0 16 16" v-html="gear"></svg></button>
            </footer>
          </div>
        </nav>
        <article class="page">
          <h2>Index of /</h2>
          <table class="idx">
            <thead><tr><th></th><th><a href="#" class="fresh">Name</a></th><th><a href="#" class="fresh">Last modified</a></th><th><a href="#" class="fresh">Size</a></th><th><a href="#" class="fresh">Description</a></th></tr></thead>
            <tbody>
              <tr class="rule"><td colspan="5"><hr></td></tr>
              <tr v-for="f in index" :key="f.name">
                <td class="ico">
                  <svg width="20" height="22" viewBox="0 0 20 22" shape-rendering="crispEdges">
                    <g v-if="!f.icon"><path d="M2 5 3 3h6l2 2h7l2 2v11l-2 2H3l-2-2z" fill="#000" /><path d="M0 4 2 2h6l2 2h7l1 2v11l-1 1H1l-1-1z" fill="#fc9" stroke="#7a4a1c" /><path d="M2 6h6l2-2" stroke="#a86a30" fill="none" /><path d="M4 17h13V8" fill="none" stroke="#7a4a1c" stroke-dasharray="1 1" /></g>
                    <g v-else><path d="M1 1h11l5 5v15H1z" fill="#fff" stroke="#000" /><path d="M12 1v5h5z" fill="#000" /><path v-if="f.icon === 'text'" d="M4 5h5M3 8h7M4 10h9M3 12h11M5 14h8M3 16h10M6 18h7" stroke="#000" /><text v-else x="3" y="18" font-family="DejaVu Sans" font-size="19" font-weight="bold">?</text></g>
                  </svg>
                </td>
                <td><a href="#" :class="{ fresh: f.fresh }">{{ f.name }}</a></td><td class="when">{{ f.date }}</td><td class="sz">{{ f.date ? '-' : '' }}</td><td></td>
              </tr>
              <tr class="rule"><td colspan="5"><hr></td></tr>
            </tbody>
          </table>
          <address>Apache/2.4.41 (Ubuntu) Server at 192.168.1.11 Port 80</address>
          <div class="hover-url">192.168.1.11/TEMPLATE HTML/</div>
        </article>
      </section>
    </section>
  </main>
</template>

<style>
body { margin: 0; background: #000; }
</style>

<style scoped>
* { box-sizing: border-box; }
.desktop { display: grid; grid-template-columns: 4fr 3fr; height: 100vh; overflow: hidden; font: 14px/18px "Noto Sans", "Open Sans", sans-serif; color: #111; background: #000; }
.defs { position: absolute; width: 0; height: 0; }
button { border: 0; background: none; padding: 0; margin: 0; font: inherit; color: inherit; }
input { font: inherit; min-width: 0; outline: 0; }
h1, h2, p, ul { margin: 0; padding: 0; }
svg { flex: none; }
.tri { display: inline-block; border: 5px solid transparent; border-top-color: #eee; border-bottom: 0; }
.tri.dark { border-top-color: #444; }
.tri.grey { border-top-color: #999; }

.screen-left { display: grid; grid-template: 27px minmax(0, 1fr) / 60px minmax(0, 1fr); min-width: 0; min-height: 0; }
.topbar { grid-column: 1 / -1; background: #1d1d1d; color: #e6e6e6; display: flex; align-items: center; position: relative; }
.bar-btn { display: flex; align-items: center; }
.activities { margin-left: 12px; width: 84px; }
.app-btn { gap: 7px; }
.clock { position: absolute; left: 935px; display: flex; align-items: center; gap: 13px; }
.dot { width: 8px; height: 8px; border-radius: 50%; background: #eee; }
.tray { margin-left: auto; display: flex; gap: 24px; align-items: center; margin-right: 34px; }
.tray-icon { width: 16px; height: 16px; }
.tray-icon:nth-child(1), .tray-icon:nth-child(5) { margin-right: 5px; }
.lang { gap: 11px; margin-right: 31px; }
.system { gap: 12px; margin-right: 15px; }

.dock { background: linear-gradient(#4a2123, #371a2c 32%, #2b1629 60%, #1f141b); display: flex; flex-direction: column; gap: 4px; padding: 4px 4px; }
.dock-item { position: relative; height: 52px; display: grid; place-items: center; border-radius: 4px; }
.dock-item.current { background: #65434b; }
.dock-item.running::before { content: ""; position: absolute; left: 0; top: 24px; width: 5px; height: 5px; border-radius: 50%; background: #e95420; }
.apps { margin-top: auto; grid-template-columns: repeat(3, 4px); gap: 5px; align-content: center; justify-content: center; }
.apps i { width: 4px; height: 4px; border-radius: 1px; background: #eee; }

.fz { display: flex; flex-direction: column; background: #f6f6f6; border-left: 1px solid #bbb; border-right: 1px solid #999; min-height: 0; }
.fz-title { height: 37px; background: #3d3b39; color: #f4f4f4; display: flex; align-items: center; justify-content: center; position: relative; margin: 0 -1px; flex: none; }
.fz-title h1 { font-size: 14px; font-weight: 700; }
.win-controls { display: flex; align-items: center; gap: 22px; color: #fff; margin-left: auto; margin-right: 8px; }
.win-controls button { width: 12px; display: grid; place-items: center; }
.win-controls .round { width: 18px; height: 18px; border-radius: 50%; background: #6b6a68; }
.win-controls .hot { background: #e95420; }
.dim { position: absolute; right: 0; color: #aaa; }
.fz-menu { height: 25px; border-bottom: 1px solid #dcdcdc; display: flex; gap: 18px; padding-left: 7px; color: #929292; flex: none; }
.fz-tools { height: 44px; border-bottom: 2px solid #dcdcdc; display: flex; align-items: center; padding-left: 3px; flex: none; }
.tool { width: 35px; height: 34px; display: grid; place-items: center; border-radius: 4px; }
.tool.on { background: #e0e0e0; border: 1px solid #c8c8c8; }
.narrow { margin-right: 9px; }
.tool-group { border-left: 1px solid #dadada; display: flex; gap: 2px; padding: 0 7px; }
.tool-group:nth-child(4) { padding: 0 8px; }
.quick { height: 45px; border-bottom: 1px solid #c0c0c0; display: flex; align-items: center; padding-left: 5px; color: #929292; flex: none; }
.quick input { height: 34px; border: 1px solid #cdcdcd; border-radius: 4px; background: #fcfcfc; margin: 0 12px 0 8px; }
.w-host { width: 141px; }
.w-user { width: 84px; }
.w-port { width: 61px; }
.connect, .drop { height: 34px; border: 1px solid #cdcdcd; border-radius: 4px; }
.connect { width: 166px; }
.drop { width: 36px; }
.log { height: 48px; overflow: hidden; background: #fcfcfc; color: #000; flex: none; display: flex; flex-direction: column; justify-content: flex-end; }
.log p { line-height: 17px; white-space: nowrap; display: flex; flex: none; }
.log span { width: 103px; }

.panes { flex: 1; min-height: 0; display: flex; gap: 7px; background: #c3c3c3; border: solid #c3c3c3; border-width: 7px 0 6px; }
.pane { display: flex; flex-direction: column; min-width: 0; background: #f6f6f6; flex: 881 1 0; }
.pane.remote { flex-grow: 970; }
.site { height: 44px; border-bottom: 1px solid #000; display: flex; align-items: center; gap: 7px; padding: 0 4px 0 5px; color: #999; flex: none; }
.combo { flex: 1; display: flex; height: 34px; border: 1px solid #cdcdcd; border-radius: 4px; background: #fcfcfc; overflow: hidden; }
.combo input { flex: 1; border: 0; background: none; color: #333; padding: 0 8px; font-size: 15px; }
.combo button { width: 35px; border-left: 1px solid #cdcdcd; background: #f6f6f6; }
.tree { height: 54px; overflow: hidden; background: #fff; list-style: none; flex: none; color: #000; }
.remote .tree li:first-child { margin-top: -3px; }
.tree li { display: flex; align-items: center; height: 23px; padding-left: 103px; }
.remote .tree li { padding-left: 58px; }
.tree .leaf { padding-left: 123px; }
.remote .tree .leaf { padding-left: 78px; }
.tree .up { padding-left: 108px; }
.remote .tree .up { padding-left: 63px; }
.expander { border: 5px solid transparent; border-left: 6px solid #444; border-right: 0; margin-right: 14px; }
.tree span { margin-left: 1px; padding: 0 3px; line-height: 23px; }
.tree .hit { background: #e95420; color: #fff; }
.list { flex: 1; min-height: 0; overflow: hidden; background: #fff; border-top: 7px solid #c3c3c3; }
.files { border-collapse: collapse; table-layout: fixed; width: 848px; line-height: 18px; }
.remote .files { width: 950px; }
.files col.c-size { width: 80px; }
.files col.c-type { width: 100px; }
.files col.c-date { width: 264px; }
.remote col.c-size { width: 75px; }
.remote col.c-type { width: 80px; }
.remote col.c-date { width: 169px; }
.files col.c-perm { width: 153px; }
.files col.c-own { width: 80px; }
.files th { height: 25px; padding: 0 0 0 6px; font-weight: 400; text-align: left; white-space: nowrap; overflow: hidden; border-right: 1px solid #eee; }
.files th svg { margin-left: 3px; vertical-align: 0; }
.files td { height: 23px; padding: 0 5px 2px 3px; white-space: nowrap; overflow: hidden; }
.files td svg { margin: 0 7px 0 1px; vertical-align: -4px; }
.remote .files td svg { margin-left: 2px; margin-right: 6px; }
.num { text-align: right; }
.same { background: #ff8080; }
.only { background: #ffff80; }
.sel td { background: #e95420; color: #fff; }
.files .sel { outline: 1px solid #ef7b52; outline-offset: -2px; }
.pane-status { height: 22px; padding-left: 5px; color: #999; line-height: 20px; border-top: 1px solid #ddd; flex: none; }

.queue { height: 100px; background: #fff; border-bottom: 1px solid #aaa; flex: none; }
.queue table { width: 100%; table-layout: fixed; border-collapse: collapse; }
.q1 { width: 962px; }
.q2 { width: 60px; }
.queue th { height: 24px; padding: 0 0 0 5px; text-align: left; font-weight: 400; border-bottom: 1px solid #eee; overflow: hidden; }
.queue-tabs { margin-top: 2px; height: 24px; flex: none; border-top: 1px solid #999; display: flex; padding-left: 4px; background: linear-gradient(#d2d2d2, #f6f6f6); }
.queue-tabs button { height: 22px; line-height: 20px; padding: 0 0 0 7px; text-align: left; border: 1px solid #aaa; border-top: 0; border-radius: 0 0 3px 3px; background: #e6e6e6; }
.queue-tabs .sel { background: #fff; font-weight: 700; width: 119px; }
.queue-tabs .t-fail { width: 224px; }
.queue-tabs .t-done { width: 215px; }
.fz-status { height: 24px; display: flex; align-items: center; gap: 3px; padding-right: 22px; justify-content: flex-end; color: #aaa; flex: none; }
.fz-status span { margin: 0 84px 0 8px; }
.led { width: 11px; height: 11px; border-radius: 50%; margin-left: 1px; }
.green { background: radial-gradient(circle at 40% 30%, #8c8, #175c17 60%); }
.red { background: radial-gradient(circle at 40% 30%, #c88, #5c1111 60%); }

.screen-right { display: grid; grid-template-rows: 5fr 1fr; min-height: 0; min-width: 0; }
.browser { background: #fff; display: flex; flex-direction: column; min-height: 0; }
.tabs { height: 44px; background: #323031; border-bottom: 1px solid #222; display: flex; align-items: center; gap: 4px; padding-left: 2px; color: #e6e6e6; flex: none; }
.tab { width: 221px; height: 36px; display: flex; align-items: center; gap: 6px; padding: 0 11px 0 8px; border-radius: 4px; }
.tab span { flex: 1; white-space: nowrap; overflow: hidden; -webkit-mask-image: linear-gradient(90deg, #000 85%, transparent); mask-image: linear-gradient(90deg, #000 85%, transparent); }
.tab.active { background: #f8f8f8; color: #444; }
.tab button, .plus { display: grid; }
.plus { margin-left: 11px; }
.navbar { height: 41px; background: #f8f8f8; border-bottom: 1px solid #c4c4c4; display: flex; align-items: center; gap: 20px; padding: 0 16px; position: relative; flex: none; color: #444; }
.navbar > button { display: grid; }
.exts { margin-left: auto; margin-right: -10px; display: flex; }
.exts button { width: 36px; height: 36px; display: grid; place-items: center; }
.exts svg { width: 16px; height: 16px; }
.exts svg.wide { width: 20px; height: 20px; margin-top: -6px; }

.suggest { position: absolute; top: 0; left: 164px; width: 644px; background: #fff; border: 1px solid #c0c0c0; border-radius: 4px; box-shadow: 0 6px 18px rgba(0, 0, 0, 0.15); padding: 0 6px; color: #111; z-index: 2; font-size: 15px; }
.url-row { height: 40px; border-bottom: 1px solid #d5d5d5; display: flex; align-items: center; padding: 0 6px; gap: 10px; }
.url { flex: 1; border: 0; padding: 0; height: 24px; color: #111; }
.url::selection { background: #e95420; color: #fff; }
.url-row button { display: grid; }
.globe { width: 16px; height: 16px; fill: none; stroke: currentColor; stroke-width: 1.3; }
.top-hit { margin-top: 6px; height: 34px; border-radius: 4px; background: #e95420; color: #fff; display: flex; align-items: center; text-decoration: none; padding-left: 7px; }
.top-hit span { margin-left: 9px; }
.top-hit i { width: 15px; border-top: 1px solid #f3a98f; margin: 0 6px; }
.top-hit small { font-size: 13px; }
.result { display: grid; grid-template: 22px 20px / 16px minmax(0, 1fr); column-gap: 9px; padding: 9px 7px 7px; text-decoration: none; color: #111; height: 58px; align-items: center; }
.r-title, .r-url { white-space: nowrap; overflow: hidden; line-height: 22px; -webkit-mask-image: linear-gradient(90deg, #000 95%, transparent); mask-image: linear-gradient(90deg, #000 95%, transparent); }
.r-url { grid-column: 2; font-size: 13px; line-height: 20px; color: #0a7ea4; }
.engines { height: 49px; border-top: 1px solid #d5d5d5; margin-top: 5px; display: flex; align-items: center; padding-left: 6px; color: #666; font-size: 14px; }
.engines span { width: 135px; }
.engines button { width: 40px; height: 32px; display: grid; place-items: center; }
.engines .cfg { margin-left: auto; width: 16px; margin-right: 6px; color: #333; }

.page { flex: 1; position: relative; padding: 8px; font: 16px/19px "DejaVu Serif", serif; color: #000; min-height: 0; }
.page h2 { font-size: 32px; line-height: 38px; margin: 1px 0 20px; }
.idx { border-spacing: 2px; margin-left: 0; width: 576px; table-layout: fixed; }
.idx th:nth-child(1) { width: 22px; }
.idx th:nth-child(2) { width: 249px; }
.idx th:nth-child(3) { width: 148px; }
.idx th:nth-child(4) { width: 44px; }
.idx th, .idx td { padding: 1px; white-space: nowrap; overflow: hidden; }
.idx th { height: 24px; }
.idx tbody td { height: 24px; }
.idx .ico { padding: 0; line-height: 0; }
.idx tbody .rule td { height: 22px; padding: 0; }
.idx hr { margin: 0; border: 1px inset #777; }
.idx a { color: #551a8b; }
.idx a.fresh { color: #00e; }
.when, .sz { text-align: right; }
.page address { margin-top: 0; }
.hover-url { position: absolute; left: 0; bottom: 0; height: 22px; padding: 0 5px; background: #f8f8f8; border: 1px solid #c0c0c0; border-width: 1px 1px 0 0; border-radius: 0 4px 0 0; color: #444; font: 14px/20px "Noto Sans", sans-serif; }
</style>
